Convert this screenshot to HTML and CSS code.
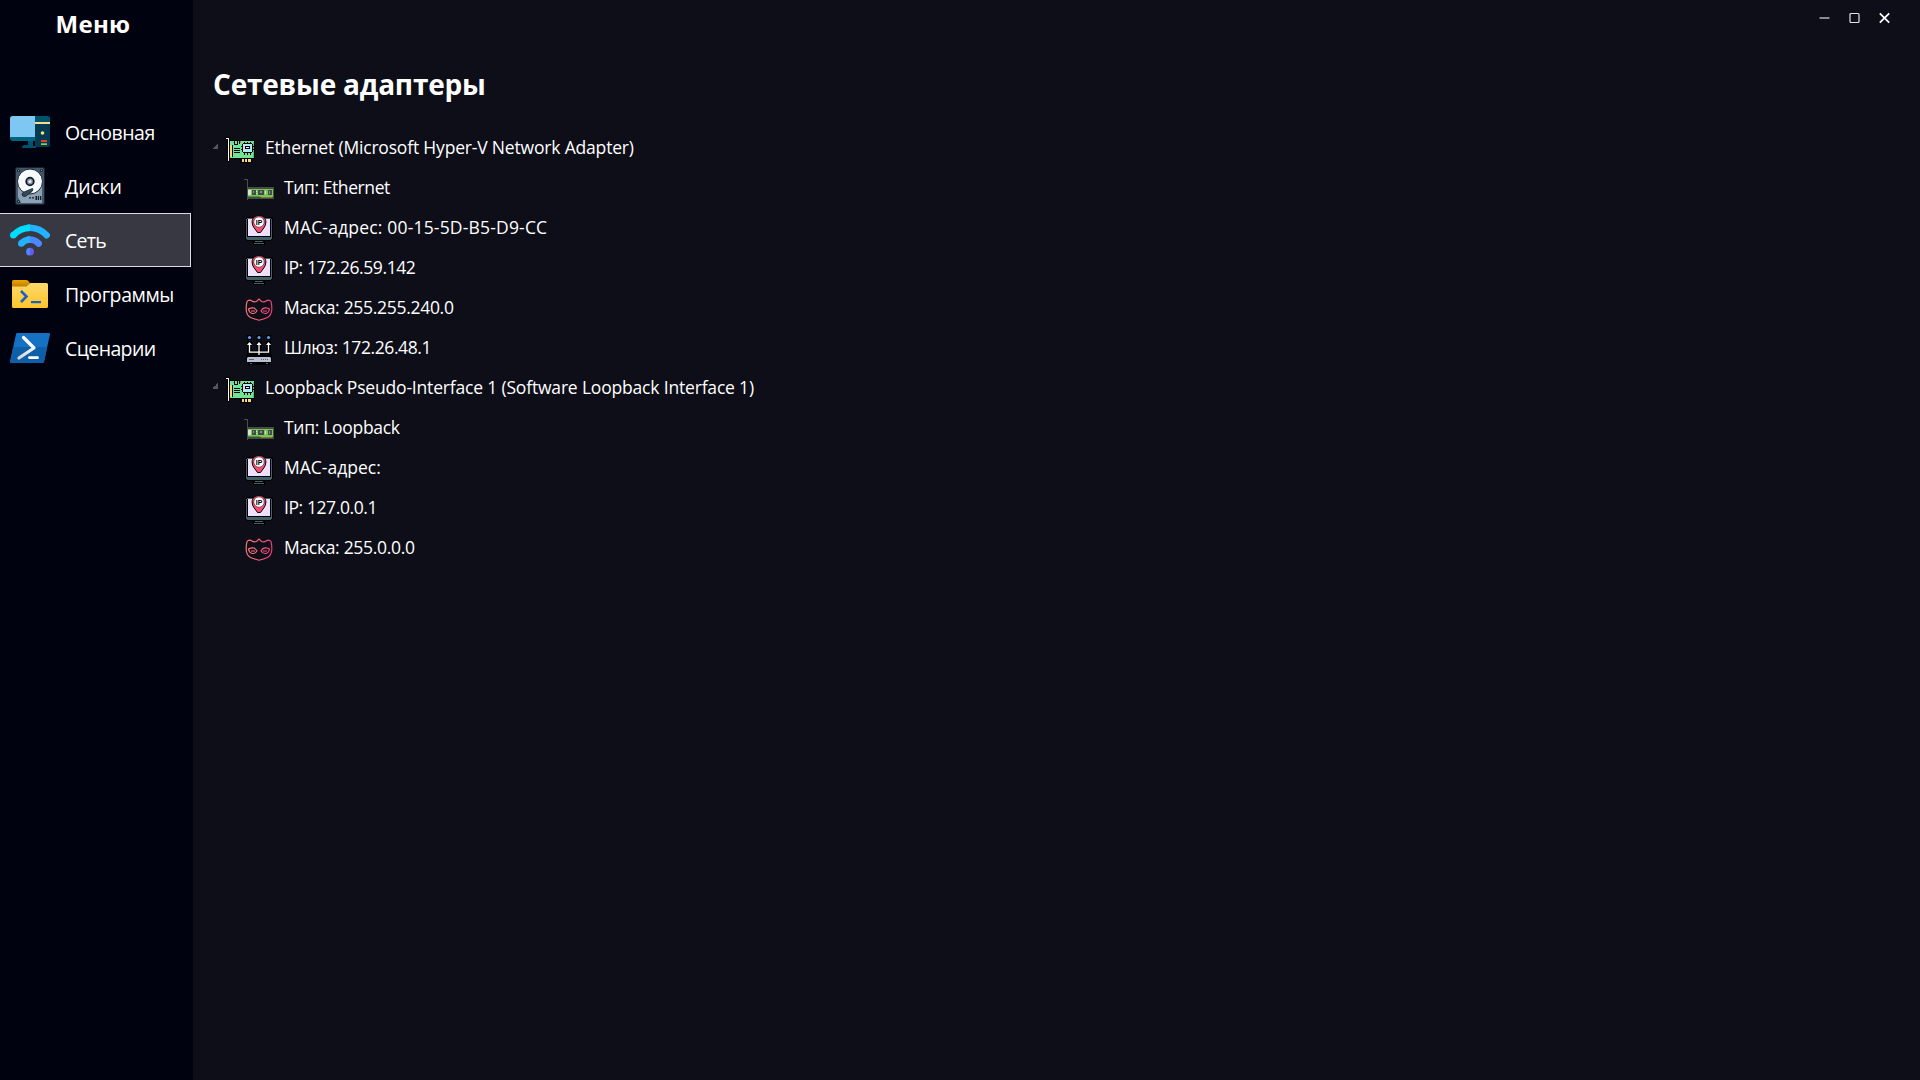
FILE: index.html
```html
<!DOCTYPE html>
<html lang="ru">
<head>
<meta charset="utf-8">
<title>Сетевые адаптеры</title>
<link rel="stylesheet" href="styles.css">
</head>
<body>
<svg class="defs" aria-hidden="true">
  <defs>
    <linearGradient id="maskLine" x1="0" y1="0" x2="1" y2="0">
      <stop offset="0" stop-color="#ff7d7d"/><stop offset="1" stop-color="#f0407e"/>
    </linearGradient>
    <linearGradient id="folderFill" x1="0" y1="0" x2="0" y2="1">
      <stop offset="0" stop-color="#ffd869"/><stop offset="1" stop-color="#fec52b"/>
    </linearGradient>
    <linearGradient id="folderTab" x1="0" y1="0" x2="0" y2="1">
      <stop offset="0" stop-color="#eba600"/><stop offset="1" stop-color="#bb7b00"/>
    </linearGradient>
    <linearGradient id="psMark" x1="0" y1="0" x2="0" y2="1">
      <stop offset="0.3" stop-color="#ffffff"/><stop offset="1" stop-color="#d4d8dc"/>
    </linearGradient>
    <symbol id="adapter" viewBox="0 0 30 30">
      <g shape-rendering="crispEdges">
        <path fill="#000" d="M-1 4h5v3h25v19h-3v4H14v-4H4v3H1V7h-2z"/>
        <path fill="#6fe597" d="M4 8h24v17H4z"/>
        <path fill="#3fc576" d="M27 9h1v16h-1z"/>
        <path fill="#fff" d="M0 5h3v23H2V6H0z"/>
        <path fill="#fdd56c" d="M4 12h2v12H4zM16 26h9v3h-9z"/>
        <path fill="#000" d="M6 12h1v12H6zM8 15h6v1H8zM8 17h6v1H8zM8 19h6v1H8zM18 26h1v3h-1zM21 26h1v3h-1zM17 10h9v1h1v8h-1v1h-9v-1h-1v-8h1zM18 9h1v1h-1zM21 9h1v1h-1zM24 9h1v1h-1zM18 20h1v2h-1zM21 20h1v2h-1zM24 20h1v2h-1zM15 13h1v1h-1zM15 16h1v1h-1zM27 13h1v1h-1zM27 16h1v1h-1zM8 8h1v3h2v1H8zM11 8h1v4h-1zM13 8h1v3h-1z"/>
        <path fill="#b9e5f5" d="M17 11h9v8h-9z"/>
        <path fill="#000" d="M19 13h5v3h-5z"/>
        <path fill="#e9faff" d="M20 14h3v1h-3z"/>
        <path fill="#f25b72" d="M7 9h1v1H7zM14 8h1v2h-1z"/>
      </g>
    </symbol>
    <symbol id="card" viewBox="0 0 30 30">
      <g shape-rendering="crispEdges">
        <path fill="#4d4d50" d="M0 6h4v21H3V7H0z"/>
        <path fill="#474d43" d="M4 14h26v12H4z"/>
        <path fill="#73c957" d="M4 16h25v8H4z"/>
        <path fill="#e0e0e0" d="M4 17h3v5H4z"/>
        <path fill="#474b48" d="M8 17h4v5H8zM14 17h6v5h-6zM24 17h4v5h-4z"/>
        <path fill="#d9d9d9" d="M5 18h1v3H5zM12 18h1v1h-1zM12 20h1v1h-1zM21 18h1v3h-1z"/>
        <path fill="#87908c" d="M9 18h1v2H9zM16 18h2v2h-2zM25 18h1v3h-1z"/>
        <path fill="#4f9d40" d="M4 23h12v1H4z"/>
        <path fill="#9a6d36" d="M17 24h11v1H17z"/>
      </g>
    </symbol>
    <symbol id="ip" viewBox="0 0 30 30">
      <g shape-rendering="crispEdges">
        <path fill="#000" d="M2 4h26v1h1v21h-1v1h-1v1h-6v4H9v-4H3v-1H2v-1H1V5h1z"/>
        <path fill="#466069" d="M3 5h24v1h1v20h-1v1H3v-1H2V6h1z"/>
        <path fill="#000" d="M3 6h24v18H3z"/>
        <path fill="#efe1fb" d="M4 6h22v17H4z"/>
        <path fill="#466069" d="M11 28h8v1h-8zM10 30h10v1H10z"/>
      </g>
      <path fill="#fb4d74" stroke="#000" d="M15 2.500c4.200 0 6.900 2.700 6.900 6.500 0 5-3.400 7-5.400 10.500h-3C11.500 16 8.100 14 8.100 9c0-3.800 2.700-6.500 6.900-6.500z"/>
      <circle cx="15" cy="9" r="5.200" fill="#fff" stroke="#000" stroke-width=".5"/>
      <text x="15" y="11.500" class="pin-text">IP</text>
    </symbol>
    <symbol id="mask" viewBox="0 0 30 30">
      <g fill="none" stroke="url(#maskLine)" stroke-width="1.100">
        <path d="M3 8.500Q5 6 8 8q2 1.500 4.500.5L15 6l2.500 2.500Q20 9.500 22 8q3-2 5 .5 1 4 .8 8.500-.3 5-4.300 7.500Q19.500 26 15 27.300 10.500 26 6.500 24.500 2.500 22 2.200 17 2 12.500 3 8.500z"/>
        <path d="M4.500 16q6-3 8.500 2-2 3-5 2.500-3-1-3.500-4.500zM25.500 16q-6-3-8.500 2 2 3 5 2.500 3-1 3.500-4.500zM7 18h4M19 18h4"/>
      </g>
    </symbol>
    <symbol id="gateway" viewBox="0 0 30 30">
      <path fill="#000" d="M3 8h24v13h1v8h-2v3H4v-3H2v-8h1zM3 2h5v5H3zM12.500 2h5v5h-5zM22 2h5v5h-5z"/>
      <path fill="#0e0e19" d="M8 7.500h4.500v10H8zM17.500 7.500H22v10h-4.500z"/>
      <g fill="#5aa2ef"><circle cx="5.500" cy="4.500" r="1.600"/><circle cx="15" cy="4.500" r="1.600"/><circle cx="24.500" cy="4.500" r="1.600"/></g>
      <path fill="none" stroke="#fff" stroke-width="1.300" d="M5.500 10v9.200h19V10M15 10v12"/>
      <path fill="#fff" d="M3 12l2.500-3L8 12zM12.500 12L15 9l2.500 3zM22 12l2.500-3 2.500 3z"/>
      <path fill="#b9bfd0" d="M4 24h22l1 1v4H3v-4z"/>
      <path fill="#5f6678" d="M5 26h5v1H5zM17 26h1v1h-1zM19 26h1v1h-1zM21 26h1v1h-1zM23 26h1v1h-1zM6 30h2v1H6zM22 30h2v1h-2z"/>
    </symbol>
  </defs>
</svg>

<div class="window">
  <nav class="sidebar">
    <h2 class="menu-title">Меню</h2>
    <ul class="menu">
      <li class="menu-item">
        <svg class="menu-icon" viewBox="0 0 40 40">
          <path fill="#00536c" d="M18 28h5v6h3v2H12q0-3 3-3h3z"/>
          <path fill="#006680" d="M3 4h22v25H3q-3 0-3-3V7q0-3 3-3z"/>
          <path fill="#7dc7f2" d="M3 4h22v21H0V7q0-3 3-3z"/>
          <path fill="#053b50" d="M25 4h12q3 0 3 3v26q0 2-3 2H25z"/>
          <path fill="#00536c" d="M25 4h12q3 0 3 3v3H25z"/>
          <path fill="#fddc87" d="M25 10h15v2H25z"/><circle cx="32.500" cy="21" r="1.800" fill="#fddc87"/>
          <path fill="#e23c39" d="M31 28h6v2h-6z"/><path fill="#9cc93d" d="M31 31.300h6V33h-6z"/>
        </svg>
        <span class="label ls-5">Основная</span>
      </li>
      <li class="menu-item">
        <svg class="menu-icon" viewBox="0 0 40 40">
          <rect x="5.500" y="1.500" width="29" height="37" rx="2" fill="#43576a" stroke="#16212b"/>
          <path fill="#8ca0b6" d="M8 17v14l3 6h21V19z"/>
          <circle cx="20" cy="15.500" r="12.500" fill="#f5fbfc" stroke="#17232d"/>
          <circle cx="20" cy="15.500" r="3.800" fill="#8496a8" stroke="#111c27" stroke-width="1.800"/>
          <circle cx="20" cy="15.500" r="1.500" fill="#e9eff3"/>
          <path fill="#34495b" stroke="#111c27" stroke-width=".8" d="M22.500 22.500q1 1-.5 3l-6 4.500q-3 1.500-4-1-.5-2 2-3z"/>
          <g fill="#15202b"><circle cx="8.500" cy="4.500" r="1.600"/><circle cx="31.500" cy="4.500" r="1.600"/><circle cx="8.500" cy="35.500" r="1.600"/><path d="M25.500 30h1.500v4h-1.500zM27.800 30h1.300v4h-1.300zM30 30h1.300v4H30zM19 31.200h2v1.200h-2zM22 31.200h2v1.200h-2z"/></g>
          <g fill="#7e91a2"><circle cx="8.500" cy="4.500" r=".7"/><circle cx="31.500" cy="4.500" r=".7"/><circle cx="8.500" cy="35.500" r=".7"/></g>
        </svg>
        <span class="label ls-2">Диски</span>
      </li>
      <li class="menu-item active">
        <svg class="menu-icon" viewBox="0 0 40 40">
          <g fill="none" stroke-width="6.500">
            <path stroke="#22b2ff" stroke-linecap="round" d="M20 7.700q10 .3 16.700 7.500"/>
            <path stroke="#00dcff" d="M20 7.700q-10 .3-16.700 7.500"/>
            <path stroke="#4b88ff" stroke-linecap="round" d="M20 19.500q5.400.3 8.700 4"/>
            <path stroke="#22b2ff" d="M20 19.500q-5.400.3-8.700 4"/>
          </g>
          <circle cx="3.300" cy="15.200" r="3.250" fill="#00dcff"/>
          <path fill="#00dcff" d="M16.500 4.700l3.500-.25v6.500l-3.500.3z"/>
          <circle cx="11.300" cy="23.500" r="3.250" fill="#22b2ff"/>
          <path fill="#22b2ff" d="M16.500 16.700l3.500-.4v6.400l-3.500.5z"/>
          <path fill="#4b88ff" d="M20 27.800a3.900 3.900 0 0 0 0 7.800z"/><path fill="#6a58f5" d="M20 27.800a3.900 3.900 0 0 1 0 7.800z"/>
        </svg>
        <span class="label ls-7">Сеть</span>
      </li>
      <li class="menu-item">
        <svg class="menu-icon" viewBox="0 0 40 40">
          <path fill="url(#folderTab)" d="M3.500 6H16q1.500 0 2.500 1.200L20.500 10l-4 3H2V7.500Q2 6 3.500 6z"/>
          <path fill="url(#folderFill)" d="M2 12.500h14.500L20.500 9H36.500q1.500 0 1.500 1.500v22q0 1.500-1.500 1.500h-33Q2 34 2 32.500z"/>
          <path fill="none" stroke="#1b62c0" stroke-width="2.600" d="M11 17l5.500 5.500L11 28"/><path fill="#1b62c0" d="M21 27h10v2.200H21z"/>
        </svg>
        <span class="label ls-4">Программы</span>
      </li>
      <li class="menu-item">
        <svg class="menu-icon" viewBox="0 0 40 40">
          <path fill="#1471c4" d="M7.500 5H39q1.300 0 1 1.300l-6 27.500q-.3 1.200-1.500 1.200H1q-1.300 0-1-1.300L6 6.200Q6.300 5 7.500 5z"/>
          <path fill="#0f5ea8" d="M3.200 19H37.200l-3.200 14.800q-.3 1.200-1.500 1.200H1q-1.300 0-1-1.300z"/>
          <path fill="none" stroke="url(#psMark)" stroke-width="3.200" stroke-linecap="round" stroke-linejoin="round" d="M13.500 9.500L24 20 9 30"/>
          <path stroke="#fff" stroke-width="2.800" stroke-linecap="round" d="M19.500 29.700h8"/>
        </svg>
        <span class="label ls-6">Сценарии</span>
      </li>
    </ul>
  </nav>

  <main class="content">
    <header class="caption">
      <svg class="caption-icon" viewBox="0 0 12 12"><path stroke="#b4b4b8" stroke-width="1.500" d="M.5 6h10"/></svg>
      <svg class="caption-icon" viewBox="0 0 12 12"><rect x="1" y="1.500" width="9" height="9" rx="1" fill="none" stroke="#e2e2e4" stroke-width="1.200"/></svg>
      <svg class="caption-icon" viewBox="0 0 12 12"><path stroke="#fff" stroke-width="1.700" d="M.8 1.300l9.400 9.400M10.200 1.300L.8 10.700"/></svg>
    </header>
    <h1 class="title">Сетевые адаптеры</h1>
    <div class="tree">
      <div class="node"><i class="expander"></i><svg class="tree-icon"><use href="#adapter"/></svg><span class="label ls-2">Ethernet (Microsoft Hyper-V Network Adapter)</span></div>
      <div class="leaf"><svg class="tree-icon"><use href="#card"/></svg><span class="label ls-4">Тип: Ethernet</span></div>
      <div class="leaf"><svg class="tree-icon"><use href="#ip"/></svg><span class="label ls-wide">MAC-адрес: 00-15-5D-B5-D9-CC</span></div>
      <div class="leaf"><svg class="tree-icon"><use href="#ip"/></svg><span class="label ls-4">IP: 172.26.59.142</span></div>
      <div class="leaf"><svg class="tree-icon"><use href="#mask"/></svg><span class="label ls-3">Маска: 255.255.240.0</span></div>
      <div class="leaf"><svg class="tree-icon"><use href="#gateway"/></svg><span class="label ls-4">Шлюз: 172.26.48.1</span></div>
      <div class="node"><i class="expander"></i><svg class="tree-icon"><use href="#adapter"/></svg><span class="label ls-2">Loopback Pseudo-Interface 1 (Software Loopback Interface 1)</span></div>
      <div class="leaf"><svg class="tree-icon"><use href="#card"/></svg><span class="label ls-3">Тип: Loopback</span></div>
      <div class="leaf"><svg class="tree-icon"><use href="#ip"/></svg><span class="label">MAC-адрес:</span></div>
      <div class="leaf"><svg class="tree-icon"><use href="#ip"/></svg><span class="label ls-4">IP: 127.0.0.1</span></div>
      <div class="leaf"><svg class="tree-icon"><use href="#mask"/></svg><span class="label ls-3">Маска: 255.0.0.0</span></div>
    </div>
  </main>
</div>
</body>
</html>
```
FILE: styles.css
```css
* { box-sizing: border-box; }

body {
  margin: 0;
  overflow: hidden;
  background: #0e0e19;
  color: #fff;
  font-family: "Open Sans", "Noto Sans", sans-serif;
}

.defs { position: absolute; width: 0; height: 0; }

.window { display: flex; width: 100vw; height: 100vh; }

.sidebar { width: 193px; flex: none; background: #01020f; }

.menu-title {
  height: 105px;
  margin: 0;
  padding: 7px 7px 0 0;
  font-size: 24px;
  line-height: 33px;
  font-weight: 700;
  letter-spacing: .3px;
  text-align: center;
}

.menu { margin: 0; padding: 0; list-style: none; }

.menu-item {
  display: flex;
  align-items: center;
  gap: 15px;
  width: 191px;
  height: 54px;
  padding-left: 10px;
  font-size: 19.500px;
  line-height: 28px;
  white-space: nowrap;
}

.menu-item .label { padding-top: 2px; }

.menu-item.active {
  background: #383842;
  box-shadow: inset -1px 0 #dadadd, inset 0 1px #dadadd, inset 0 -1px #dadadd;
}

.menu-icon { width: 40px; height: 40px; flex: none; }

.content { flex: 1; display: flex; flex-direction: column; }

.caption {
  display: flex;
  justify-content: flex-end;
  gap: 18px;
  height: 36px;
  padding: 12px 29px 0 0;
}

.caption-icon { width: 12px; height: 12px; }

.title {
  height: 92px;
  margin: 0;
  padding: 29px 0 0 20px;
  font-size: 28px;
  line-height: 38px;
  font-weight: 700;
  letter-spacing: -.2px;
}

.tree { font-size: 17.500px; line-height: 24px; white-space: nowrap; }
.tree .label { padding-bottom: 3px; }

.node, .leaf { display: flex; align-items: center; height: 40px; }

.node { padding-left: 19px; }
.leaf { padding-left: 51px; }
.leaf .tree-icon { margin-right: 10px; }

/* Per-label tracking */
.ls-2 { letter-spacing: -.18px; }
.ls-3 { letter-spacing: -.3px; }
.ls-4 { letter-spacing: -.41px; }
.ls-5 { letter-spacing: -.5px; }
.ls-6 { letter-spacing: -.6px; }
.ls-7 { letter-spacing: -.7px; }
.ls-wide { letter-spacing: .18px; }

.expander {
  width: 6px;
  height: 6px;
  margin: 0 8px 4px 0;
  background: linear-gradient(135deg, transparent 50%, #55555a 50%);
}

.tree-icon { width: 30px; height: 30px; margin-right: 9px; flex: none; overflow: visible; }
.tree-icon use, symbol { overflow: visible; }

.pin-text { font: 700 7px "Liberation Sans", sans-serif; text-anchor: middle; fill: #000; }
```
